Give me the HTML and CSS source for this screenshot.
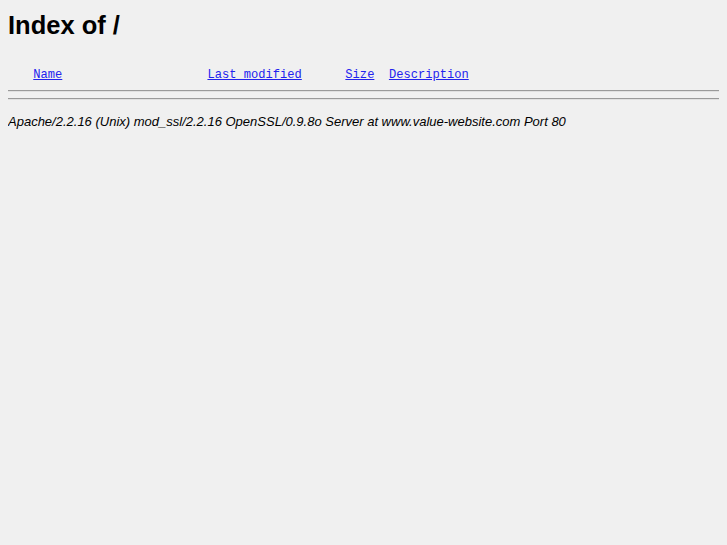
FILE: index.html
```html
<!DOCTYPE html>
<html>
<head>
    <meta charset="UTF-8">
    <title>Index of /</title>
    <link rel="stylesheet" href="styles.css">
</head>
<body>
<h1>Index of /</h1>
<pre><span class="icon" title="Icon "></span> <a href="?C=N;O=D">Name</a>                    <a href="?C=M;O=A">Last modified</a>      <a href="?C=S;O=A">Size</a>  <a href="?C=D;O=A">Description</a><hr class="first"><hr></pre>
<address>Apache/2.2.16 (Unix) mod_ssl/2.2.16 OpenSSL/0.9.8o Server at www.value-website.com Port 80</address>
</body>
</html>
```

FILE: styles.css
```css
/* Página de listagem padrão */
body {
    margin: 8px;
    background-color: #f0f0f0;
    color: #000;
    font-family: "Liberation Sans", Arial, sans-serif;
    font-size: 13px;
}

h1 {
    font-size: 25.5px;
    font-weight: bold;
    margin: 2px 0 20px;
    line-height: 30px;
}

pre {
    font-family: "Liberation Mono", "Courier New", monospace;
    font-size: 12.1px;
    margin: 13px 0 14px;
}

.icon {
    display: inline-block;
    width: 18px;
    height: 22px;
    vertical-align: bottom;
}

a {
    color: #2323ee;
}

hr {
    border: none;
    border-top: 1px solid #9a9a9a;
    border-bottom: 1px solid #e0e0e0;
    margin: 6px 0;
}

hr.first {
    margin-top: 8px;
}

address {
    font-style: italic;
    line-height: 16px;
}
```
